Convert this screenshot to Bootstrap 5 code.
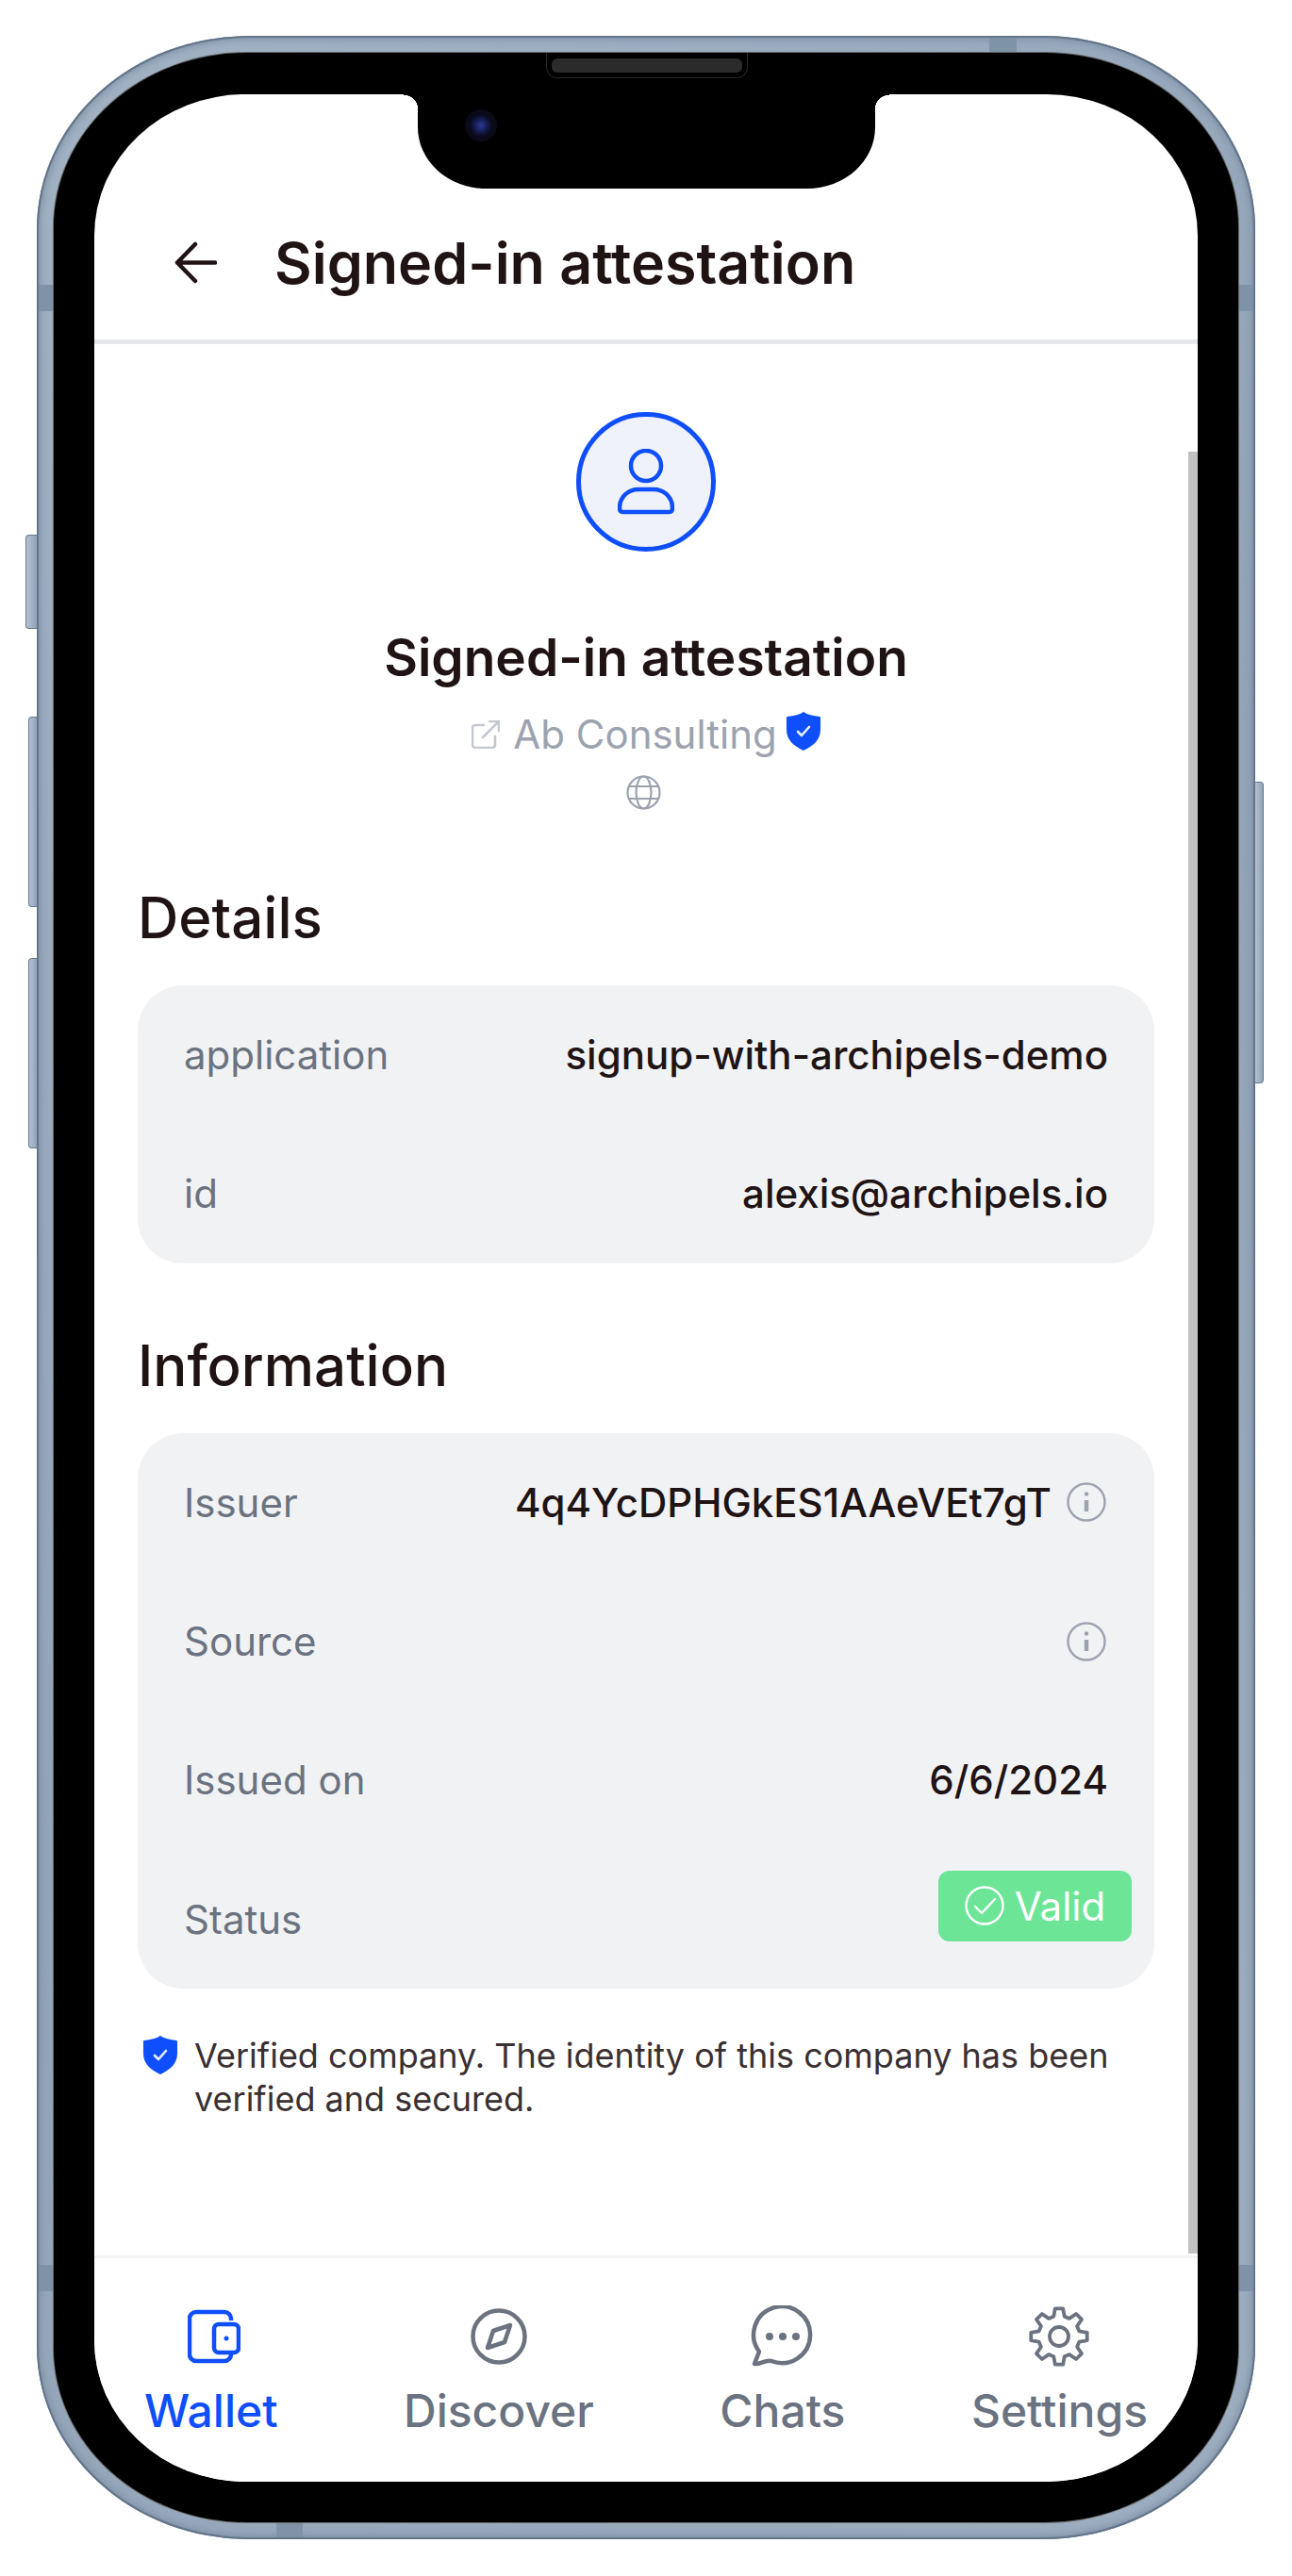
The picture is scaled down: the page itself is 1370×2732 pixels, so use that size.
<!DOCTYPE html>
<html lang="en">
  <head>
    <meta charset="UTF-8" />
    <meta name="viewport" content="width=device-width, initial-scale=1.0" />
    <title>Signed-in attestation</title>
    <link rel="stylesheet" href="https://cdn.jsdelivr.net/npm/bootstrap@5.3.0/dist/css/bootstrap.min.css" />
    <style>
      body {
        background-color: #fff;
        font-family: Inter, "Liberation Sans", sans-serif;
        color: #201314;
      }
      /* device frame */
      .phone {
        position: relative;
        width: 1292px;
        height: 2655px;
        margin: 38px 0 0 39px;
        padding: 18px;
        border-radius: 225px 225px 225px 225px / 205px 205px 205px 205px;
        background: linear-gradient(135deg, #a2b2c4, #92a4b8 50%, #9dadc0);
        box-shadow: inset 0 0 0 2px #64758a, inset 0 0 8px 3px #7b8da2;
      }
      .bezel {
        position: relative;
        height: 100%;
        padding: 44px 43px 43px;
        background: #000;
        border-radius: 205px 205px 205px 205px / 185px 185px 185px 185px;
        box-shadow: 0 0 0 1px #666;
      }
      .side-btn {
        position: absolute;
        background: linear-gradient(90deg, #b4c3d3, #8fa3b8);
        border: 1px solid #66798d;
        border-right: 0;
        border-radius: 4px 0 0 4px;
      }
      .side-btn.mute { left: -12px; top: 529px; width: 12px; height: 100px; }
      .side-btn.up { left: -9px; top: 722px; width: 9px; height: 202px; }
      .side-btn.down { left: -9px; top: 978px; width: 9px; height: 202px; }
      .side-btn.power {
        left: 1292px; top: 791px; width: 9px; height: 320px;
        border: 1px solid #66798d;
        border-left: 0;
        border-radius: 0 4px 4px 0;
      }
      .band { position: absolute; background: #7f93a8; }
      .band.l1 { left: 2px; top: 264px; width: 16px; height: 28px; }
      .band.r1 { right: 2px; top: 264px; width: 16px; height: 28px; }
      .band.l2 { left: 2px; top: 2364px; width: 16px; height: 28px; }
      .band.r2 { right: 2px; top: 2364px; width: 16px; height: 28px; }
      .band.t { left: 1010px; top: 2px; width: 29px; height: 16px; }
      .band.b { left: 254px; bottom: 2px; width: 28px; height: 16px; }
      .speaker {
        position: absolute;
        left: 522px;
        top: 0;
        width: 214px;
        height: 27px;
        border: 1px solid #262626;
        border-top: 0;
        border-radius: 0 0 12px 12px;
      }
      .speaker::after {
        content: "";
        position: absolute;
        left: 5px;
        right: 5px;
        top: 6px;
        height: 15px;
        border-radius: 6px;
        background: #2b2b2b;
      }
      .screen {
        position: relative;
        width: 1170px;
        height: 2532px;
        overflow: hidden;
        background: #fff;
        border-radius: 160px 160px 160px 160px / 150px 150px 150px 150px;
      }
      .notch {
        position: absolute;
        left: 343px;
        top: 0;
        width: 485px;
        height: 100px;
        background: #000;
        border-radius: 0 0 72px 72px / 0 0 65px 65px;
      }
      .notch::before,
      .notch::after {
        content: "";
        position: absolute;
        top: 0;
        width: 15px;
        height: 16px;
      }
      .notch::before {
        left: -15px;
        background: radial-gradient(circle at 0 100%, transparent 15px, #000 15.5px);
      }
      .notch::after {
        right: -15px;
        background: radial-gradient(circle at 100% 100%, transparent 15px, #000 15.5px);
      }
      .camera {
        position: absolute;
        left: 50px;
        top: 16px;
        width: 34px;
        height: 34px;
        border-radius: 50%;
        background: radial-gradient(circle, #2a3a9a 0, #10163f 35%, #090a1a 50%, #0a0710 100%);
      }
      /* app */
      .app-top {
        height: 265px;
        padding: 156px 0 0 85px;
        border-bottom: 5px solid #e5e7eb;
        gap: 61px;
      }
      .top-title { font-size: 61px; line-height: 46px; font-weight: 600; }
      .app-body { padding: 72px 46px 0; }
      .avatar-ring {
        width: 148px;
        height: 148px;
        border: 5px solid #0f4ffb;
        background: #eff1fb;
      }
      .hero-title { font-size: 55px; line-height: 60px; font-weight: 600; margin-top: 82px; }
      .issuer-line {
        margin-top: 27px;
        height: 50px;
        font-size: 42px;
        line-height: 50px;
        color: #9ca3af;
        gap: 14px;
      }
      .issuer-line .seal { margin-left: -4px; }
      .globe-ico { margin: 18px auto 0; display: block; position: relative; left: -3px; }
      .sect-head { font-size: 60px; line-height: 60px; font-weight: 500; margin-bottom: 42px; }
      .sect-head.first { margin-top: 84px; }
      .sect-head.next { margin-top: 78px; }
      .info-box { background: #f1f2f4; border-radius: 48px; padding: 0 49px; }
      .info-row { height: 147.3px; font-size: 42px; }
      .info-row > svg, .row-val > svg { margin-right: 2px; }
      .row-key { color: #6b7280; }
      .row-val { font-weight: 500; }
      .valid-tag {
        margin: -28px -25px 0 0;
        width: 205px;
        height: 75px;
        border-radius: 12px;
        background: #6ce596;
        color: #fff;
        gap: 11px;
        font-size: 42px;
      }
      .verified-note { margin: 48px 0 0 6px; font-size: 36px; line-height: 46px; gap: 18px; }
      .verified-note svg { margin-top: 2px; flex: none; }
      .verified-note p { color: #3a2f31; }
      .fake-scroll {
        position: absolute;
        right: 0;
        top: 379px;
        width: 10px;
        height: 1911px;
        background: #c1c1c1;
      }
      .app-tabs {
        position: absolute;
        left: 0;
        right: 0;
        bottom: 0;
        height: 240px;
        background: #fff;
        border-top: 3px solid #f3f4f6;
        padding: 53px 53px 0;
      }
      .tab-item { font-size: 48px; line-height: 60px; font-weight: 500; color: #6b7280; }
      .tab-item svg { display: block; margin-bottom: 19px; }
      .tab-item svg.tall { margin-top: -3px; margin-bottom: 16px; }
      .tab-item svg.purse { margin-left: 6px; }
      .tab-item.on { color: #0f4ffb; }
    </style>
  </head>
  <body>
    <svg width="0" height="0" class="position-absolute">
      <symbol id="shield" viewBox="0 0 36 41">
        <path d="M18 0c4 3 10 4 17 5 1 0 1 1 1 2v12c0 10-7 17-18 22C7 36 0 29 0 19V7c0-1 0-2 1-2C8 4 14 3 18 0z" fill="#0f4ffb" />
        <path d="M12 21l4 4 8-9" fill="none" stroke="#fff" stroke-width="2.6" stroke-linecap="round" stroke-linejoin="round" opacity=".9" />
      </symbol>
      <symbol id="info" viewBox="0 0 42 42">
        <circle cx="21" cy="21" r="19.5" fill="none" stroke="#9ca3af" stroke-width="2.4" />
        <circle cx="21" cy="12.5" r="2.2" fill="#9ca3af" />
        <path d="M21 19v12" stroke="#9ca3af" stroke-width="4.5" />
      </symbol>
    </svg>

    <div class="phone">
      <span class="side-btn mute"></span>
      <span class="side-btn up"></span>
      <span class="side-btn down"></span>
      <span class="side-btn power"></span>
      <span class="band l1"></span><span class="band r1"></span>
      <span class="band l2"></span><span class="band r2"></span>
      <span class="band t"></span><span class="band b"></span>

      <div class="bezel">
        <div class="speaker"></div>
        <div class="screen">
          <div class="notch"><span class="camera"></span></div>

          <div class="app-top d-flex align-items-start">
            <svg width="45" height="45" viewBox="0 0 45 45" fill="none" stroke="#201314" stroke-width="4.5" stroke-linecap="round" stroke-linejoin="round">
              <path d="M43 22.5H3M22 3L3 22.5 22 42" />
            </svg>
            <div class="top-title">Signed-in attestation</div>
          </div>

          <div class="app-body">
            <div class="avatar-ring rounded-circle mx-auto d-flex align-items-center justify-content-center">
              <svg width="60" height="70" viewBox="0 0 60 70" fill="none" stroke="#0f4ffb" stroke-width="4.5">
                <circle cx="30" cy="18" r="16" />
                <path d="M2 63c0-13 10-20 20-20h16c10 0 20 7 20 20 0 3-1 4-4 4H6c-3 0-4-1-4-4z" />
              </svg>
            </div>
            <div class="hero-title text-center">Signed-in attestation</div>
            <div class="issuer-line d-flex justify-content-center align-items-center">
              <svg width="30" height="30" viewBox="0 0 30 30" fill="none" stroke="#c4c8cf" stroke-width="2.6" stroke-linecap="round" stroke-linejoin="round">
                <path d="M13 5H4a3 3 0 0 0-3 3v18a3 3 0 0 0 3 3h18a3 3 0 0 0 3-3v-9" />
                <path d="M12 18L29 1M19 1h10v10" />
              </svg>
              <span>Ab Consulting</span>
              <svg width="36" height="41" class="seal mb-2"><use href="#shield" /></svg>
            </div>
            <svg class="globe-ico" width="37" height="37" viewBox="0 0 37 37" fill="none" stroke="#9ca3af" stroke-width="2.2">
              <circle cx="18.5" cy="18.5" r="17" />
              <ellipse cx="18.5" cy="18.5" rx="8" ry="17" />
              <path d="M3 12h31M3 25h31" />
            </svg>

            <div class="sect-head first">Details</div>
            <div class="info-box">
              <div class="info-row d-flex justify-content-between align-items-center">
                <span class="row-key">application</span>
                <span class="row-val">signup-with-archipels-demo</span>
              </div>
              <div class="info-row d-flex justify-content-between align-items-center">
                <span class="row-key">id</span>
                <span class="row-val">alexis@archipels.io</span>
              </div>
            </div>

            <div class="sect-head next">Information</div>
            <div class="info-box">
              <div class="info-row d-flex justify-content-between align-items-center">
                <span class="row-key">Issuer</span>
                <span class="row-val d-flex align-items-center gap-3">4q4YcDPHGkES1AAeVEt7gT <svg width="42" height="42"><use href="#info" /></svg></span>
              </div>
              <div class="info-row d-flex justify-content-between align-items-center">
                <span class="row-key">Source</span>
                <svg width="42" height="42"><use href="#info" /></svg>
              </div>
              <div class="info-row d-flex justify-content-between align-items-center">
                <span class="row-key">Issued on</span>
                <span class="row-val">6/6/2024</span>
              </div>
              <div class="info-row d-flex justify-content-between align-items-center">
                <span class="row-key">Status</span>
                <span class="valid-tag d-flex align-items-center justify-content-center">
                  <svg width="42" height="42" viewBox="0 0 42 42" fill="none" stroke="#fff" stroke-width="2.4" stroke-linecap="round" stroke-linejoin="round">
                    <circle cx="21" cy="21" r="19.5" />
                    <path d="M11 22l7 7 14-15" />
                  </svg>
                  Valid
                </span>
              </div>
            </div>

            <div class="verified-note d-flex align-items-start">
              <svg width="36" height="41"><use href="#shield" /></svg>
              <p class="mb-0">Verified company. The identity of this company has been verified and secured.</p>
            </div>
          </div>

          <div class="fake-scroll"></div>

          <div class="app-tabs d-flex justify-content-between align-items-start">
            <div class="tab-item on d-flex flex-column align-items-center">
              <svg class="purse" width="56" height="60" viewBox="0 0 56 60" fill="none" stroke="#0f4ffb" stroke-width="4.5" stroke-linejoin="round">
                <path d="M46 13v-2a7 7 0 0 0-7-7H9a7 7 0 0 0-7 7v38a7 7 0 0 0 7 7h30a7 7 0 0 0 7-7v-2" />
                <rect x="28" y="17" width="26" height="30" rx="5" />
                <circle cx="41" cy="32" r="2.5" fill="#0f4ffb" stroke="none" />
              </svg>
              Wallet
            </div>
            <div class="tab-item d-flex flex-column align-items-center">
              <svg width="62" height="60" viewBox="0 0 62 60" fill="none" stroke="#6b7280" stroke-width="4.5" stroke-linejoin="round">
                <circle cx="31" cy="30" r="27.5" />
                <path d="M43 18l-18 6-6 18 18-6z" />
              </svg>
              Discover
            </div>
            <div class="tab-item d-flex flex-column align-items-center">
              <svg class="tall" width="67" height="66" viewBox="0 0 67 66" fill="none" stroke="#6b7280" stroke-width="4.5" stroke-linejoin="round">
                <path d="M4 62l5-13A30 30 0 1 1 22 59c-6-2-12 4-18 3z" />
                <circle cx="20" cy="33" r="4" fill="#6b7280" stroke="none" />
                <circle cx="34" cy="33" r="4" fill="#6b7280" stroke="none" />
                <circle cx="48" cy="33" r="4" fill="#6b7280" stroke="none" />
              </svg>
              Chats
            </div>
            <div class="tab-item d-flex flex-column align-items-center">
              <svg class="tall" width="66" height="66" viewBox="0 0 66 66" fill="none" stroke="#6b7280" stroke-width="3.8" stroke-linejoin="round">
                <path id="gear-path" />
                <circle cx="33" cy="33" r="10" />
              </svg>
              Settings
            </div>
          </div>
        </div>
      </div>
    </div>

    <script src="https://cdn.jsdelivr.net/npm/bootstrap@5.3.0/dist/js/bootstrap.bundle.min.js"></script>
    <script>
      // eight toothed gear for the settings tab
      let pts = [];
      for (let i = 0; i < 8; i++) {
        let a = i * 45;
        [[-15, 22], [-8, 30], [8, 30], [15, 22]].forEach(p => {
          let r = (a + p[0] - 90) * Math.PI / 180;
          pts.push((33 + p[1] * Math.cos(r)).toFixed(1) + ' ' + (33 + p[1] * Math.sin(r)).toFixed(1));
        });
      }
      document.getElementById('gear-path').setAttribute('d', 'M' + pts.join('L') + 'Z');
    </script>
  </body>
</html>
